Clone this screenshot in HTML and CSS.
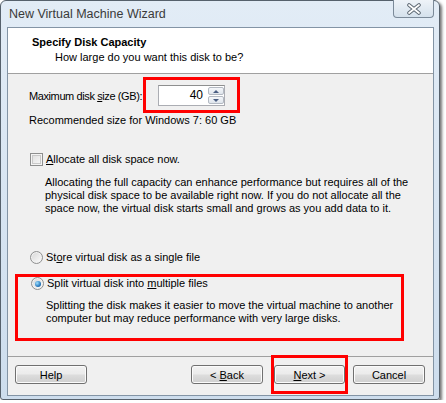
FILE: index.html
```html
<!DOCTYPE html>
<html lang="en">
<head>
  <meta charset="UTF-8">
  <title>New Virtual Machine Wizard</title>
  <link rel="stylesheet" href="styles.css">
</head>
<body>
  <div class="window">
    <div class="titlebar">
      <span class="title">New Virtual Machine Wizard</span>
      <span class="close">
        <svg width="16" height="12" viewBox="0 0 16 12">
          <path d="M3 2 L13 10 M13 2 L3 10" stroke="#5b6671" stroke-width="3.6" stroke-linecap="round"/>
          <path d="M3 2 L13 10 M13 2 L3 10" stroke="#ffffff" stroke-width="1.7" stroke-linecap="round"/>
        </svg>
      </span>
    </div>

    <div class="client">
      <div class="header">
        <div class="heading">Specify Disk Capacity</div>
        <div class="subheading">How large do you want this disk to be?</div>
      </div>

      <div class="content">
        <!-- disk size -->
        <div class="size-row">
          <label class="size-label">Maximum disk <u>s</u>ize (GB):</label>
          <div class="mark mark-spin">
            <div class="spinbox">
              <span class="spin-value">40</span>
              <span class="spin-btns">
                <span class="spin-btn"><span class="arrow-up"></span></span>
                <span class="spin-btn"><span class="arrow-down"></span></span>
              </span>
            </div>
          </div>
        </div>
        <p class="recommended">Recommended size for Windows 7: 60 GB</p>

        <!-- allocate -->
        <div class="option option-alloc">
          <span class="checkbox"></span>
          <span><u>A</u>llocate all disk space now.</span>
        </div>
        <p class="note">
          Allocating the full capacity can enhance performance but requires all of the<br>
          physical disk space to be available right now. If you do not allocate all the<br>
          space now, the virtual disk starts small and grows as you add data to it.
        </p>

        <!-- single / split -->
        <div class="option option-single">
          <span class="radio"></span>
          <span>St<u>o</u>re virtual disk as a single file</span>
        </div>
        <div class="mark mark-split">
          <div class="option">
            <span class="radio checked"></span>
            <span>Split virtual disk into <u>m</u>ultiple files</span>
          </div>
          <p class="note">
            Splitting the disk makes it easier to move the virtual machine to another<br>
            computer but may reduce performance with very large disks.
          </p>
        </div>
      </div>

      <div class="footer">
        <button class="btn">Help</button>
        <span class="spacer"></span>
        <button class="btn">&lt; <u>B</u>ack</button>
        <span class="mark mark-next"><button class="btn btn-next"><u>N</u>ext &gt;</button></span>
        <button class="btn btn-cancel">Cancel</button>
      </div>
    </div>
  </div>
</body>
</html>
```

FILE: styles.css
```css
* {
  box-sizing: border-box;
}
body {
  margin: 0;
  background-color: #ffffff;
  font-family: "Liberation Sans", Arial, sans-serif;
  font-size: 11px;
  color: #000000;
}
.window {
  width: 440px;
  height: 400px;
  display: flex;
  flex-direction: column;
  padding: 0 5px 3px 6px;
  border: 1px solid #56616c;
  border-radius: 6px 6px 3px 3px;
  background: linear-gradient(#e2ecf6, #cddded);
  box-shadow: 2px 2px 3px rgba(0, 0, 0, 0.55);
}
.titlebar {
  height: 26px;
  display: flex;
  align-items: flex-start;
}
.title {
  margin-left: 2px;
  line-height: 26px;
  font-size: 12.5px;
  color: #3a3a3a;
}
.close {
  margin-left: auto;
  margin-top: -1px;
  width: 41px;
  height: 18px;
  display: flex;
  align-items: center;
  justify-content: center;
  border: 1px solid #7b8a99;
  border-top: none;
  border-radius: 0 0 4px 4px;
  background: linear-gradient(#eef3f8, #d5e1ec);
}
.client {
  flex: 1;
  display: flex;
  flex-direction: column;
  border: 1px solid #8394a5;
  background-color: #f0f0f0;
}
.header {
  height: 46px;
  padding: 8px 0 0 24px;
  background-color: #ffffff;
  border-bottom: 1px solid #a0a0a0;
  line-height: 13px;
}
.heading {
  font-weight: bold;
}
.subheading {
  margin: 2px 0 0 23px;
}
.content {
  flex: 1;
  padding-left: 21px;
  line-height: 13px;
}
.size-row {
  display: flex;
  align-items: center;
  margin-top: 3px;
}
.size-label {
  flex: none;
  width: 114px;
  padding-top: 3px;
  white-space: nowrap;
  letter-spacing: -0.4px;
}
/* rode markeringen */
.mark {
  border: 3px solid #ff0000;
}
.mark-spin {
  padding: 5px 12px 4px 12px;
}
.spinbox {
  width: 67px;
  height: 21px;
  display: flex;
  border: 1px solid #abadb3;
  border-top-color: #8e8f8f;
  background-color: #ffffff;
}
.spin-value {
  flex: 1;
  text-align: right;
  padding-right: 5px;
  line-height: 19px;
  font-size: 12px;
}
.spin-btns {
  width: 16px;
  display: flex;
  flex-direction: column;
  gap: 1px;
  padding: 1px 0;
}
.spin-btn {
  flex: 1;
  display: flex;
  align-items: center;
  justify-content: center;
  border: 1px solid #b3b9c2;
  border-radius: 2px;
  background: linear-gradient(#f5f7fa, #dfe5ec);
}
.arrow-up {
  border-left: 3px solid transparent;
  border-right: 3px solid transparent;
  border-bottom: 3px solid #4a5e82;
}
.arrow-down {
  border-left: 3px solid transparent;
  border-right: 3px solid transparent;
  border-top: 3px solid #4a5e82;
}
.recommended {
  margin: 1px 0 0 0;
}
.option {
  display: flex;
  align-items: center;
  gap: 3px;
  height: 13px;
}
.option-alloc {
  margin-top: 26px;
}
.option-single {
  margin-top: 36px;
}
.checkbox {
  width: 13px;
  height: 13px;
  margin-left: 1px;
  border: 1px solid #8e8f8f;
  background: linear-gradient(135deg, #dcdcdc, #fbfbfb);
  box-shadow: inset 0 0 0 1px #f4f4f4, inset 0 0 0 2px #c9c9c9;
}
.radio {
  width: 13px;
  height: 13px;
  margin-left: 1px;
  border-radius: 50%;
  border: 1px solid #8e8f8f;
  background: linear-gradient(135deg, #d6d6d6, #fdfdfd);
  box-shadow: inset 0 0 0 1px #f2f2f2;
  display: flex;
  align-items: center;
  justify-content: center;
}
.radio.checked::after {
  content: "";
  width: 6px;
  height: 6px;
  border-radius: 50%;
  background: radial-gradient(circle at 35% 35%, #9fe0ff, #2a7cc0 60%, #14477a);
}
.note {
  margin: 10px 0 0 16px;
}
.mark-split {
  width: 389px;
  margin: 10px 0 0 -14px;
  padding: 0 0 13px 12px;
}
.mark-split .note {
  margin-top: 9px;
}
.footer {
  display: flex;
  align-items: center;
  padding: 8px 8px 11px 7px;
  border-top: 1px solid #a0a0a0;
}
.spacer {
  flex: 1;
}
.btn {
  width: 72px;
  height: 19px;
  padding: 0;
  font-family: "Liberation Sans", Arial, sans-serif;
  font-size: 11px;
  color: #000000;
  border: 1px solid #707070;
  border-radius: 3px;
  background: linear-gradient(#f2f2f2 0%, #ebebeb 48%, #dddddd 52%, #cfcfcf 100%);
  box-shadow: inset 0 0 0 1px #fbfbfb;
}
.mark-next {
  margin: -10px 0 -10px 8px;
  padding: 7px 0;
  display: flex;
}
.btn-next {
  width: 71px;
}
.btn-cancel {
  margin-left: 5px;
}
```
